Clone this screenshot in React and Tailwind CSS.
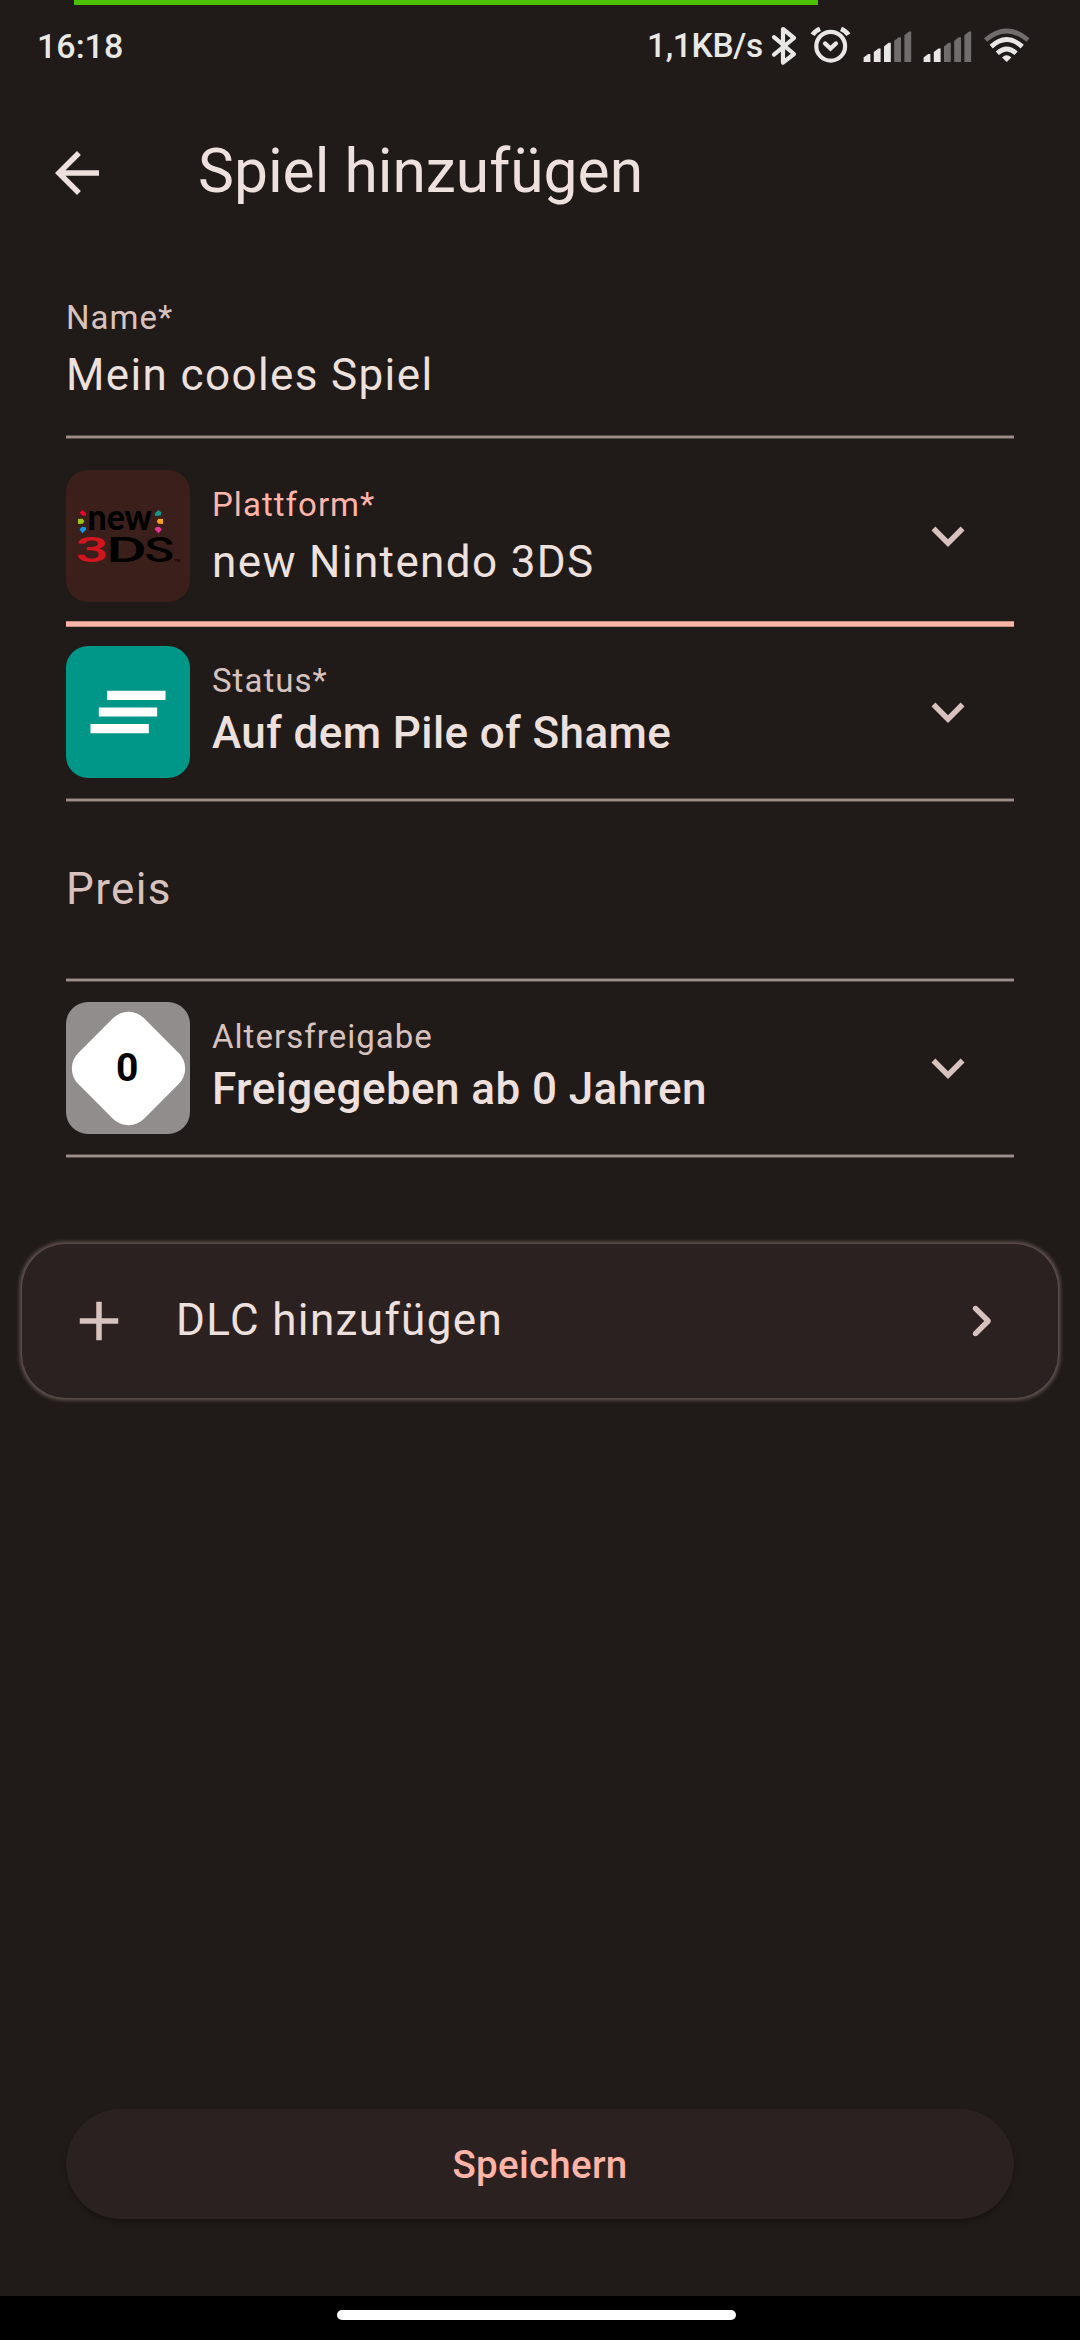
import React from "react";

function SignalBars({ active }) {
  return (
    <svg className="h-[34px] w-[50px]" viewBox="0 0 50 34">
      {[0, 1, 2, 3, 4].map((i) => {
        const x = 0.6 + i * 10.2;
        const top = 25 - i * 5.6;
        return (
          <path
            key={i}
            d={`M${x} 33V${top + 3.6}L${x + 4.6} ${top}H${x + 6.8}V33Z`}
            fill={i < active ? "#e9e7e5" : "#716d6c"}
          />
        );
      })}
    </svg>
  );
}

function StatusBar() {
  return (
    <div className="flex h-[92px] items-center font-medium text-[#e8e8e5]">
      <span className="ml-[37px] text-[34px]">16:18</span>
      <div className="mr-[49px] ml-auto flex items-center">
        <span className="text-[33.5px] tracking-[-0.3px]">1,1KB/s</span>
        <svg className="ml-[7px] h-[40px] w-[28px]" viewBox="770 25 28 40" fill="none" stroke="#e9e7e5" strokeWidth="4.2" strokeLinecap="round" strokeLinejoin="round">
          <path d="M774 36.2L794 53L783 61.6V28L794 37L774 53.6" />
        </svg>
        <svg className="ml-[12px] h-[40px] w-[42px]" viewBox="810 26 42 40" fill="none" stroke="#e9e7e5" strokeWidth="4.2">
          <circle cx="830.7" cy="46.2" r="14.4" />
          <path d="M825 43.4L830.5 48.6L836 43.4" strokeLinecap="round" />
          <path d="M812.6 34.8Q815 31 820 28.9M848.4 34.8Q846 31 841 28.9" strokeWidth="4.8" />
        </svg>
        <div className="ml-[11px] flex gap-[10px]">
          <SignalBars active={3} />
          <SignalBars active={2} />
        </div>
        <svg className="ml-[10px] h-[38px] w-[48px]" viewBox="983 27 48 38" fill="none" stroke="#e9e7e5" strokeWidth="4.8">
          <path d="M985.5 40Q1006.7 21.8 1028 40" stroke="#716d6c" />
          <path d="M991.2 46.6Q1006.7 32.6 1022.2 46.6" />
          <path d="M997.3 53.3Q1006.7 44.8 1016.1 53.3" />
          <path d="M1006.7 62L1002 57.500Q1006.700 53 1011.400 57.500Z" fill="#e9e7e5" stroke="none" />
        </svg>
      </div>
    </div>
  );
}

function Icon({ d, className }) {
  return (
    <svg className={`h-[66px] w-[66px] shrink-0 ${className}`} viewBox="0 0 24 24" fill="currentColor">
      <path d={d} />
    </svg>
  );
}

const ARROW_BACK = "M20 11H7.83l5.59-5.59L12 4l-8 8 8 8 1.41-1.41L7.83 13H20v-2z";
const EXPAND = "M7.41 8.59L12 13.17l4.59-4.58L18 10l-6 6-6-6z";
const ADD = "M19 13h-6v6h-2v-6H5v-2h6V5h2v6h6v2z";
const CHEVRON =
  "M9.29 6.71c-.39.39-.39 1.02 0 1.41L13.17 12l-3.88 3.88c-.39.39-.39 1.02 0 1.41.39.39 1.02.39 1.41 0l4.59-4.59c.39-.39.39-1.02 0-1.41L10.7 6.7c-.38-.38-1.02-.38-1.41.01z";

function Underline({ className }) {
  return (
    <div className={`flex h-[4px] flex-col bg-[#a08c89]/45 py-px ${className}`}>
      <div className="h-[2px] bg-[#a08c89]" />
    </div>
  );
}

function DropdownRow({ tile, label, labelClass, value, valueClass, className }) {
  return (
    <div className={`flex h-[132px] items-center ${className}`}>
      {tile}
      <div className="ml-[22px] h-[132px] flex-1 pt-[15px]">
        <div className={`text-[33px] leading-[40px] tracking-[1.03px] ${labelClass}`}>{label}</div>
        <div className={`text-[44px] leading-[60px] ${valueClass}`}>{value}</div>
      </div>
      <Icon d={EXPAND} className="mr-[33px] text-[#d8c2be]" />
    </div>
  );
}

function PlatformTile() {
  return (
    <div className="h-[132px] w-[124px] rounded-[22px] bg-[#3b1f1b]">
      <svg className="h-[132px] w-[124px]" viewBox="66 470 124 132">
        <g>
          <path d="M79.500 512.500l3-2.500 3.800 3.400-.6 2.600-3.400-.4z" fill="#e4062b" />
          <path d="M78 519l4.500-.3 1.800 2.600-1.600 2.500-4.700.2z" fill="#9dc515" />
          <path d="M79.500 529.500l2.400-2.700 3.800.4.700 2.400-4 3.600z" fill="#1b95e0" />
          <path d="M161.500 512.500l-3-2.500-3.800 3.400.6 2.600 5.400-.6z" fill="#16938b" />
          <path d="M163 519l-4.500-.3-1.800 2.600 1.600 2.500 4.700.2z" fill="#f5a51d" />
          <path d="M161.800 529.500l-2.400-2.700-3.800.4-.7 2.400 3.600 3.600z" fill="#e8359a" />
        </g>
        <text x="87.500" y="530.200" fontFamily="Lato, sans-serif" fontWeight="900" fontSize="36.500" textLength="64.500" lengthAdjust="spacingAndGlyphs" fill="#000">
          new
        </text>
        <g fontFamily="Roboto, sans-serif" fontWeight="500" fontSize="35.500">
          <text x="75.500" y="561.600" textLength="33" lengthAdjust="spacingAndGlyphs" fill="#d3151f">3</text>
          <text x="106" y="561.600" textLength="41" lengthAdjust="spacingAndGlyphs" fill="#000">D</text>
          <text x="144.500" y="561.600" textLength="29.500" lengthAdjust="spacingAndGlyphs" fill="#000">S</text>
        </g>
        <text x="174" y="562" fontFamily="Roboto, sans-serif" fontSize="4" fill="#000">TM</text>
      </svg>
    </div>
  );
}

function StatusTile() {
  return (
    <div className="flex h-[132px] w-[124px] items-center justify-center rounded-[22px] bg-[#009688]">
      <svg className="h-[100px] w-[100px]" viewBox="0 0 24 24" fill="#fff">
        <path d="M5 13.100h14v-2.200H5zM3 17.100h14v-2.200H3zM7 6.900v2.200h14V6.900z" />
      </svg>
    </div>
  );
}

function AgeTile() {
  return (
    <div className="flex h-[132px] w-[124px] items-center justify-center rounded-[22px] bg-[#918d8c]">
      <div className="flex h-[93px] w-[93px] rotate-45 items-center justify-center rounded-[22px] bg-white">
        <span className="-rotate-45 pr-[2px] text-[39px] leading-none font-bold text-black">0</span>
      </div>
    </div>
  );
}

export default function App() {
  return (
    <div className="flex h-[2340px] w-[1080px] flex-col overflow-hidden bg-[#201a18] font-['Roboto',sans-serif] text-[#ede0dd]">
      <div className="flex h-[92px] flex-col">
        <div className="ml-[74px] h-[5px] w-[744px] shrink-0 bg-[#49c100]" />
        <div className="-mt-[5px]">
          <StatusBar />
        </div>
      </div>

      <header className="flex h-[162px] items-center pl-[44px]">
        <Icon d={ARROW_BACK} className="text-[#ede0dd]" />
        <h1 className="ml-[88px] pb-[3px] text-[60.5px] leading-[77px]">Spiel hinzufügen</h1>
      </header>

      <main className="flex flex-col px-[66px] pt-[44px]">
        <div className="text-[33px] leading-[40px] tracking-[1.03px] text-[#d8c2be]">Name*</div>
        <div className="mt-[7px] text-[44px] leading-[60px] tracking-[1.375px]">Mein cooles Spiel</div>
        <Underline className="mt-[30px]" />

        <DropdownRow
          className="mt-[31px]"
          tile={<PlatformTile />}
          label="Plattform*"
          labelClass="text-[#ffb4a8]"
          value="new Nintendo 3DS"
          valueClass="mt-[7px] tracking-[1.375px]"
        />
        <div className="mt-[19px] h-[6px] bg-[#ffb4a8]/75 py-px">
          <div className="h-[4px] bg-[#ffb4a8]" />
        </div>

        <DropdownRow
          className="mt-[19px]"
          tile={<StatusTile />}
          label="Status*"
          labelClass="text-[#d8c2be]"
          value="Auf dem Pile of Shame"
          valueClass="mt-[2px] font-medium tracking-[0.41px]"
        />
        <Underline className="mt-[20px]" />

        <div className="mt-[57px] text-[44px] leading-[60px] tracking-[1.375px] text-[#d8c2be]">Preis</div>
        <Underline className="mt-[59px]" />

        <DropdownRow
          className="mt-[20px]"
          tile={<AgeTile />}
          label="Altersfreigabe"
          labelClass="text-[#d8c2be]"
          value="Freigegeben ab 0 Jahren"
          valueClass="mt-[2px] font-medium tracking-[0.41px]"
        />
        <Underline className="mt-[20px]" />
      </main>

      <div className="mx-[22px] mt-[86px] flex h-[154px] items-center rounded-[44px] bg-[#2c2121] px-[44px] shadow-[0_0_4px_1.5px_#6b5b58]">
        <Icon d={ADD} className="text-[#d8c2be]" />
        <span className="ml-[44px] flex-1 pb-[2px] text-[44px] leading-[60px] tracking-[1.375px]">DLC hinzufügen</span>
        <Icon d={CHEVRON} className="text-[#d8c2be]" />
      </div>

      <button className="mx-[66px] mt-auto mb-[77px] h-[110px] shrink-0 rounded-full bg-[#2c2121] pt-[2px] text-[38.5px] font-medium tracking-[0.275px] text-[#ffb4a8] shadow-[0_3px_4px_rgba(0,0,0,0.25)]">
        Speichern
      </button>

      <div className="flex h-[44px] shrink-0 bg-black pt-[14px] pl-[337px]">
        <div className="h-[10px] w-[399px] rounded-full bg-white" />
      </div>
    </div>
  );
}
